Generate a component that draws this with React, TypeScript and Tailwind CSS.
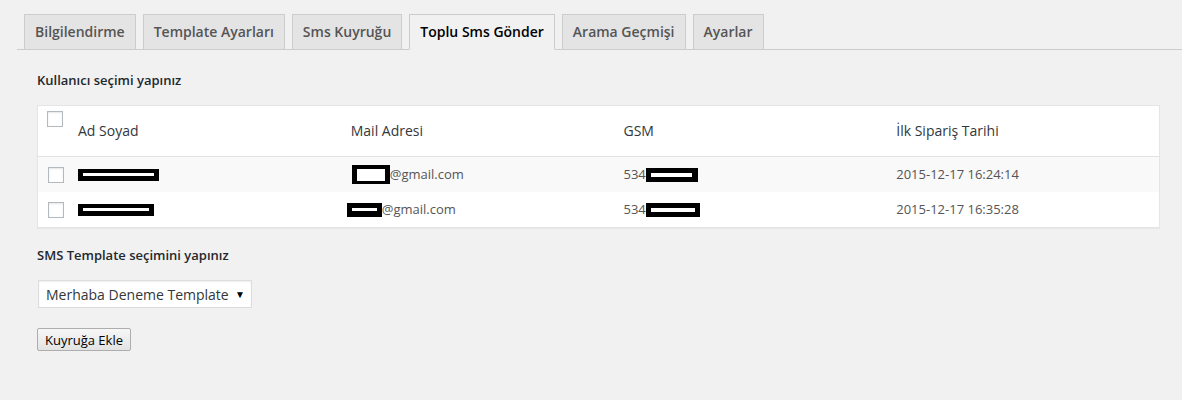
const tabs = [
  "Bilgilendirme",
  "Template Ayarları",
  "Sms Kuyruğu",
  "Toplu Sms Gönder",
  "Arama Geçmişi",
  "Ayarlar",
];
const active = "Toplu Sms Gönder";

function Redact({ w, h = 12, inner, innerH = 3 }: { w: number; h?: number; inner: number; innerH?: number }) {
  return (
    <span
      className="inline-flex items-center justify-center bg-black align-middle"
      style={{ width: w, height: h }}
    >
      <span className="bg-white" style={{ width: inner, height: innerH }} />
    </span>
  );
}

const Check = () => (
  <span className="block w-4 h-4 border border-[#b4b9be] bg-white shadow-[inset_0_1px_2px_rgba(0,0,0,0.1)]" />
);

export default function App() {
  return (
    <div
      className="w-[1182px] h-[400px] bg-[#f1f1f1] text-[#444] overflow-hidden"
      style={{ fontFamily: '"Open Sans", "Liberation Sans", sans-serif' }}
    >
      {/* ================= TABS ================= */}
      <div className="pt-[14px] ml-[17px] border-b border-[#ccc] flex h-[50px]">
        {tabs.map((t) => (
          <div
            key={t}
            className={`ml-[7px] px-[10px] h-[36px] border border-[#ccc] text-[14px] font-semibold leading-[34px] ${
              t === active
                ? "bg-[#f1f1f1] text-black border-b-[#f1f1f1] -mb-px"
                : "bg-[#e4e4e4] text-[#555]"
            }`}
          >
            {t}
          </div>
        ))}
      </div>

      <div className="px-[37px] pr-[22px]">
        {/* ================= USERS ================= */}
        <p className="mt-[21px] text-[13px] font-semibold text-[#23282d] leading-[18px]">
          Kullanıcı seçimi yapınız
        </p>

        <div className="mt-[16px] w-[1123px] bg-white border border-[#e5e5e5] shadow-[0_1px_1px_rgba(0,0,0,0.04)]">
          {/* header */}
          <div className="flex h-[51px] border-b border-[#e1e1e1] text-[14px] text-[#32373c]">
            <div className="w-[30px] pt-[5px] pl-[9px] shrink-0">
              <Check />
            </div>
            <div className="w-[273px] pl-[10px] pt-[14px]">Ad Soyad</div>
            <div className="w-[273px] pl-[10px] pt-[14px]">Mail Adresi</div>
            <div className="w-[273px] pl-[10px] pt-[14px]">GSM</div>
            <div className="w-[273px] pl-[10px] pt-[14px]">İlk Sipariş Tarihi</div>
          </div>

          {/* row 1 */}
          <div className="flex h-[35px] items-center bg-[#f9f9f9] text-[13px] text-[#555]">
            <div className="w-[30px] pl-[10px] shrink-0">
              <Check />
            </div>
            <div className="w-[273px] pl-[10px] flex">
              <Redact w={81} inner={71} />
            </div>
            <div className="w-[273px] pl-[11px] flex items-center">
              <Redact w={38} h={19} inner={28} innerH={12} />
              <span>@gmail.com</span>
            </div>
            <div className="w-[273px] pl-[10px] flex items-center">
              <span>534</span>
              <Redact w={52} h={14} inner={41} innerH={4} />
            </div>
            <div className="w-[273px] pl-[10px]">2015-12-17 16:24:14</div>
          </div>

          {/* row 2 */}
          <div className="flex h-[35px] items-center bg-white text-[13px] text-[#555]">
            <div className="w-[30px] pl-[10px] shrink-0">
              <Check />
            </div>
            <div className="w-[273px] pl-[10px] flex">
              <Redact w={76} inner={66} />
            </div>
            <div className="w-[273px] pl-[6px] flex items-center">
              <Redact w={35} h={14} inner={25} innerH={3} />
              <span>@gmail.com</span>
            </div>
            <div className="w-[273px] pl-[10px] flex items-center">
              <span>534</span>
              <Redact w={54} h={14} inner={44} innerH={4} />
            </div>
            <div className="w-[273px] pl-[10px]">2015-12-17 16:35:28</div>
          </div>
        </div>

        {/* ================= TEMPLATE ================= */}
        <p className="mt-[18px] text-[13px] font-semibold text-[#23282d] leading-[18px]">
          SMS Template seçimini yapınız
        </p>

        <div className="mt-[16px] ml-px w-[214px] h-[28px] bg-white border border-[#ddd] shadow-[inset_0_1px_2px_rgba(0,0,0,0.07)] flex items-center justify-between pl-[7px] pr-[6px] text-[14px] text-[#32373c]">
          <span>Merhaba Deneme Template</span>
          <span className="text-[10px] text-black">▼</span>
        </div>

        <button className="mt-[20px] h-[23px] w-[94px] px-[6px] border border-[#adadad] rounded-[2px] bg-gradient-to-b from-[#f7f7f7] to-[#e3e3e3] text-[13px] text-black leading-[20px] block">
          Kuyruğa Ekle
        </button>
      </div>
    </div>
  );
}
